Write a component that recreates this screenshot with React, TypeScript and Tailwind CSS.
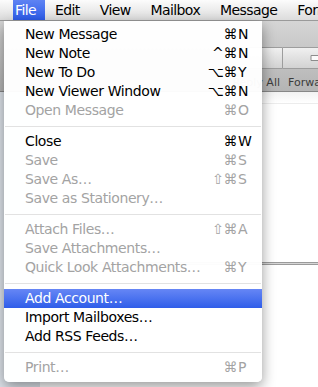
const FONT = "font-['DejaVu_Sans',sans-serif]";

type Item = { label: string; mods?: string; k?: string; disabled?: boolean; active?: boolean };

const SECTIONS: Item[][] = [
  [
    { label: 'New Message', mods: '⌘', k: 'N' },
    { label: 'New Note', mods: '^⌘', k: 'N' },
    { label: 'New To Do', mods: '⌥⌘', k: 'Y' },
    { label: 'New Viewer Window', mods: '⌥⌘', k: 'N' },
    { label: 'Open Message', mods: '⌘', k: 'O', disabled: true },
  ],
  [
    { label: 'Close', mods: '⌘', k: 'W' },
    { label: 'Save', mods: '⌘', k: 'S', disabled: true },
    { label: 'Save As…', mods: '⇧⌘', k: 'S', disabled: true },
    { label: 'Save as Stationery…', disabled: true },
  ],
  [
    { label: 'Attach Files…', mods: '⇧⌘', k: 'A', disabled: true },
    { label: 'Save Attachments…', disabled: true },
    { label: 'Quick Look Attachments…', mods: '⌘', k: 'Y', disabled: true },
  ],
  [
    { label: 'Add Account…', active: true },
    { label: 'Import Mailboxes…' },
    { label: 'Add RSS Feeds…' },
  ],
  [{ label: 'Print…', mods: '⌘', k: 'P', disabled: true }],
];

const MENUS = ['Edit', 'View', 'Mailbox', 'Message', 'Format'];

function MenuRow({ item }: { item: Item }) {
  const color = item.active ? 'text-white' : item.disabled ? 'text-[#a3a3a3]' : 'text-black';
  return (
    <div
      className={`flex h-[19px] items-center pl-[21px] pr-[13px] ${color} ${
        item.active ? 'bg-gradient-to-b from-[#6686f5] to-[#2f5de9]' : ''
      }`}
    >
      <span className="flex-1 whitespace-nowrap">{item.label}</span>
      <span className="whitespace-nowrap text-right">{item.mods}</span>
      <span className="w-[12px] pl-[1px]">{item.k}</span>
    </div>
  );
}

function FileMenu() {
  return (
    <div
      className={`absolute left-[4px] top-[21px] w-[258px] rounded-b-[5px] bg-white/[0.97] pb-[5px] pt-[4px] text-[14px] tracking-[-0.4px] shadow-[0_5px_14px_rgba(0,0,0,0.4)] ${FONT}`}
    >
      {SECTIONS.map((section, i) => (
        <div key={i}>
          {i > 0 && (
            <div className="flex h-[12px] items-center px-[1px]">
              <div className="h-px w-full bg-[#e2e2e2]" />
            </div>
          )}
          {section.map((item) => (
            <MenuRow key={item.label} item={item} />
          ))}
        </div>
      ))}
    </div>
  );
}

function ForwardArrow() {
  return (
    <svg width="22" height="14" viewBox="0 0 22 14">
      <path
        d="M1 4.5h11V1l8 6-8 6V9.5H1z"
        fill="#fafafa"
        stroke="#8c8c8c"
        strokeWidth="1"
        strokeLinejoin="round"
      />
    </svg>
  );
}

export default function App() {
  return (
    <div className={`relative h-[387px] w-[318px] overflow-hidden bg-white ${FONT}`}>
      {/* menu bar */}
      <div className="flex h-[21px] items-center border-b border-[#9a9a9a] bg-gradient-to-b from-[#fcfcfc] to-[#dcdcdc] pl-[13px] text-[14px] tracking-[-0.6px] text-black">
        <div className="flex h-full w-[32px] shrink-0 items-center bg-gradient-to-b from-[#5f83f3] to-[#2c5ae8] pl-[2px] text-white">
          File
        </div>
        {MENUS.map((m) => (
          <div key={m} className="shrink-0 whitespace-nowrap px-[10px]">
            {m}
          </div>
        ))}
      </div>

      {/* mail window behind the menu */}
      <div className="flex h-[71px] border-b border-[#878787] bg-gradient-to-b from-[#d5d5d5] to-[#b4b4b4] pl-[226px] pt-[26px]">
        <div className="flex w-[57px] shrink-0 flex-col">
          <div className="h-[23px] rounded-l-[4px] border border-[#9d9d9d] bg-gradient-to-b from-[#f0f0f0] to-[#d2d2d2]" />
          <div className="mt-[6px] whitespace-nowrap pr-[3px] text-right text-[11px] tracking-normal text-[#3c3c3c]">
            Reply All
          </div>
        </div>
        <div className="flex w-[62px] shrink-0 flex-col">
          <div className="flex h-[23px] items-center justify-center border border-l-0 border-[#9d9d9d] bg-gradient-to-b from-[#f0f0f0] to-[#d2d2d2] pl-[14px]">
            <ForwardArrow />
          </div>
          <div className="mt-[6px] whitespace-nowrap pl-[5px] text-[11px] tracking-normal text-[#3c3c3c]">Forward</div>
        </div>
      </div>
      <div className="flex h-[295px]">
        <div className="w-[40px] shrink-0 bg-[#dee4eb]" />
        <div className="flex flex-1 flex-col">
          <div className="h-[11px] bg-gradient-to-b from-[#f2f2f2] to-white" />
          <div className="h-[159px] border-t border-[#ececec] bg-white" />
          <div className="h-[3px] border-y border-[#9b9b9b] bg-[#d6d6d6]" />
          <div className="flex-1 bg-white" />
        </div>
      </div>

      <FileMenu />
    </div>
  );
}
